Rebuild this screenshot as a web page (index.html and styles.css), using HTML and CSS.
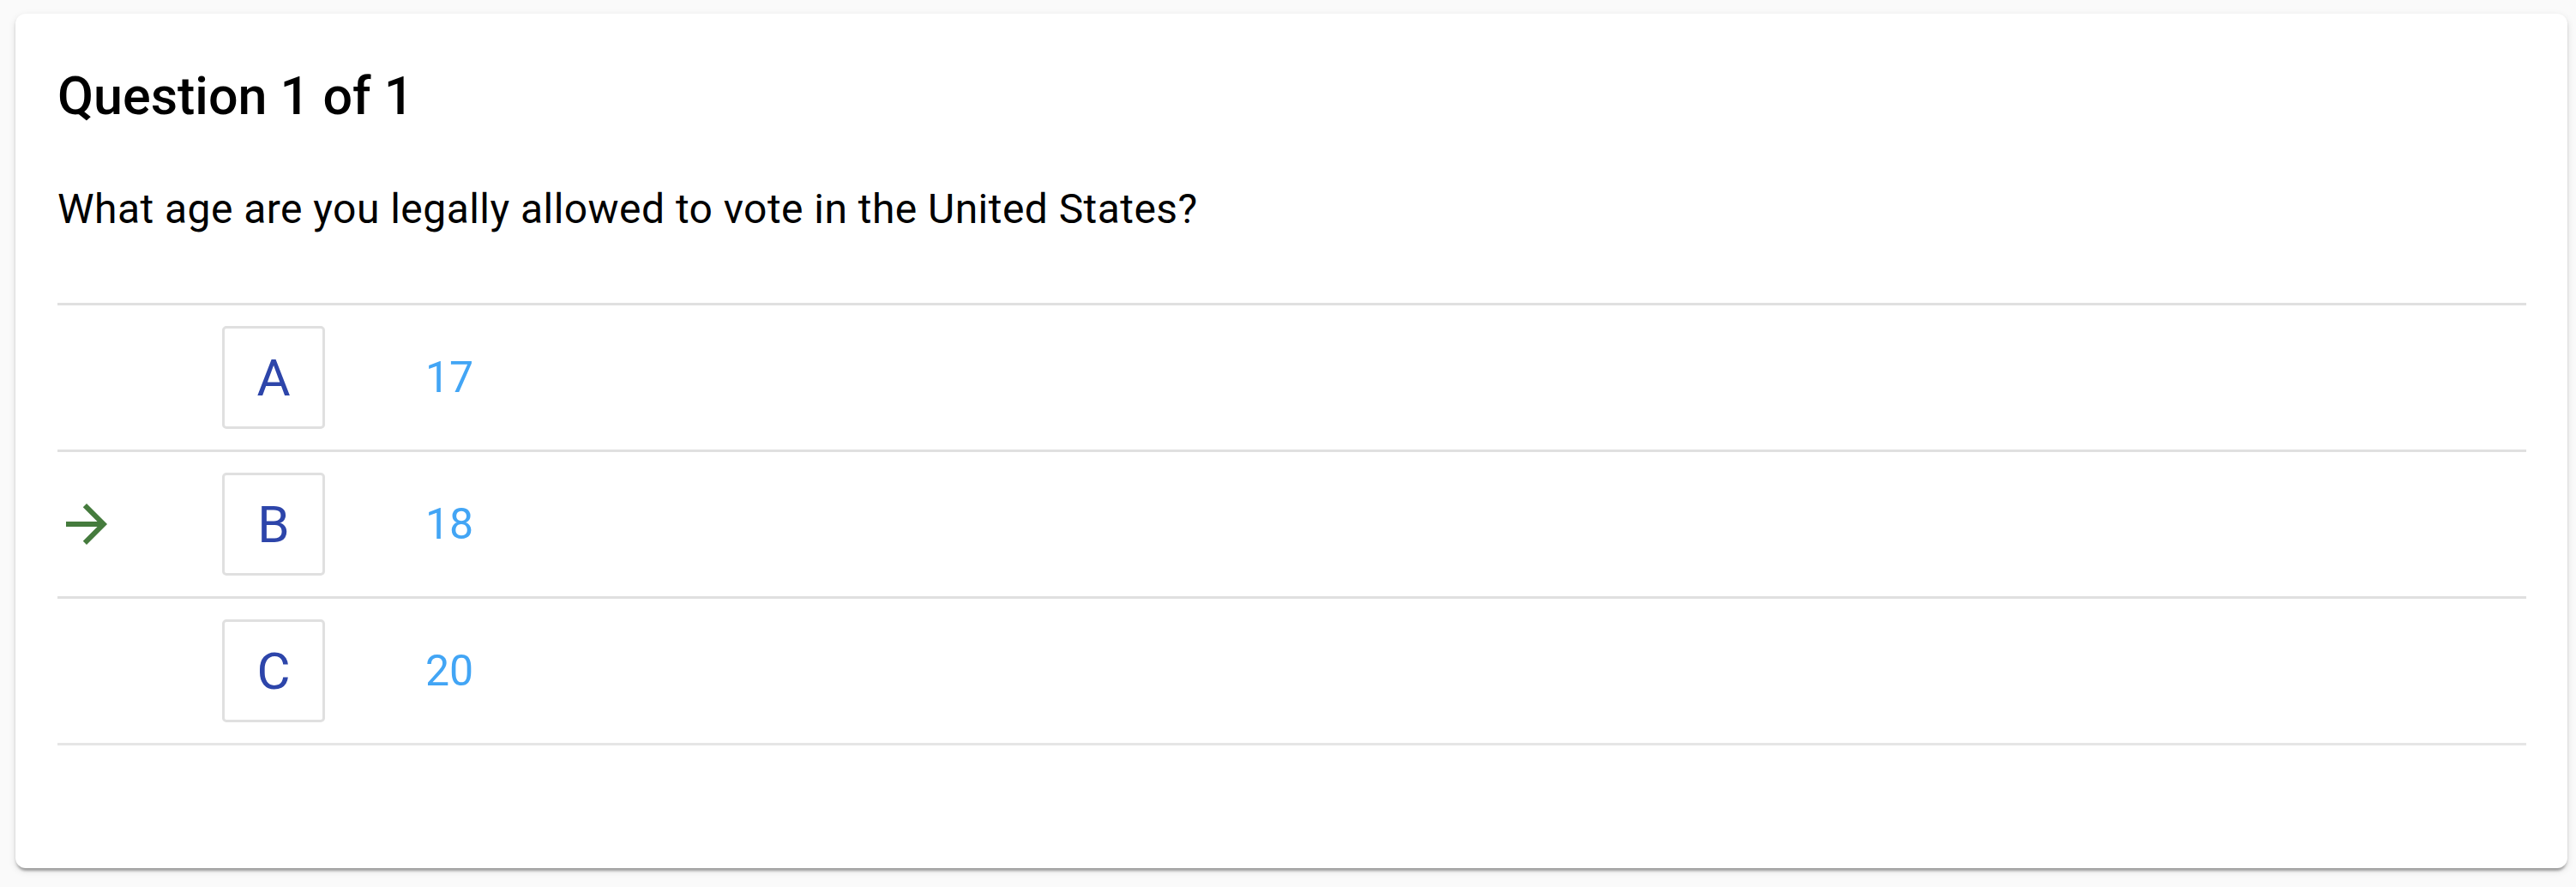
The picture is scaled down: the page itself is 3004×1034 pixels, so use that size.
FILE: index.html
```html
<!DOCTYPE html>
<html lang="en">
<head>
<meta charset="utf-8">
<title>Question 1 of 1</title>
<link rel="stylesheet" href="styles.css">
</head>
<body>
<main class="card">
  <h1 class="card-title">Question 1 of 1</h1>
  <p class="question">What age are you legally allowed to vote in the United States?</p>
  <ul class="options">
    <li class="option">
      <span class="marker"></span>
      <span class="letter">A</span>
      <span class="answer">17</span>
    </li>
    <li class="option">
      <span class="marker">
        <svg class="arrow" viewBox="0 0 24 24" aria-hidden="true"><path d="M12 4l-1.41 1.41L16.17 11H4v2h12.17l-5.58 5.59L12 20l8-8z"/></svg>
      </span>
      <span class="letter">B</span>
      <span class="answer">18</span>
    </li>
    <li class="option">
      <span class="marker"></span>
      <span class="letter">C</span>
      <span class="answer">20</span>
    </li>
  </ul>
</main>
</body>
</html>
```

FILE: styles.css
```css
html, body {
  margin: 0;
  padding: 0;
  background: #fafafa;
}

body {
  font-family: Roboto, "Liberation Sans", Arial, sans-serif;
  color: #000;
  padding: 16px 10px 22px 18px;
}

.card {
  display: block;
  background: #fff;
  border-radius: 12px;
  padding: 60px 48px 143px 49px;
  box-shadow: 0 6px 3px -3px rgba(0, 0, 0, 0.2), 0 3px 3px 0 rgba(0, 0, 0, 0.14), 0 3px 9px 0 rgba(0, 0, 0, 0.12);
}

.card-title {
  margin: 0;
  font-size: 61px;
  line-height: 72px;
  font-weight: 500;
}

.question {
  margin: 60px 0 73px;
  font-size: 48px;
  line-height: 72px;
  font-weight: 400;
  letter-spacing: 0.45px;
}

.options {
  list-style: none;
  margin: 0;
  padding: 0;
  border-bottom: 3px solid #e6e6e6;
}

.option {
  display: flex;
  align-items: center;
  border-top: 3px solid #e0e0e0;
  padding: 24px 0;
}

.marker {
  width: 192px;
  flex: 0 0 192px;
  display: flex;
  align-items: center;
}

.arrow {
  width: 72px;
  height: 72px;
  margin-left: -2px;
  fill: #457b3d;
  display: block;
}

.letter {
  box-sizing: border-box;
  width: 120px;
  height: 120px;
  flex: 0 0 120px;
  border: 3px solid #e0e0e0;
  border-radius: 5px;
  display: flex;
  align-items: center;
  justify-content: center;
  font-size: 60px;
  color: #2d45aa;
}

.answer {
  margin-left: 117px;
  font-size: 50px;
  color: #42a5f5;
}
```
